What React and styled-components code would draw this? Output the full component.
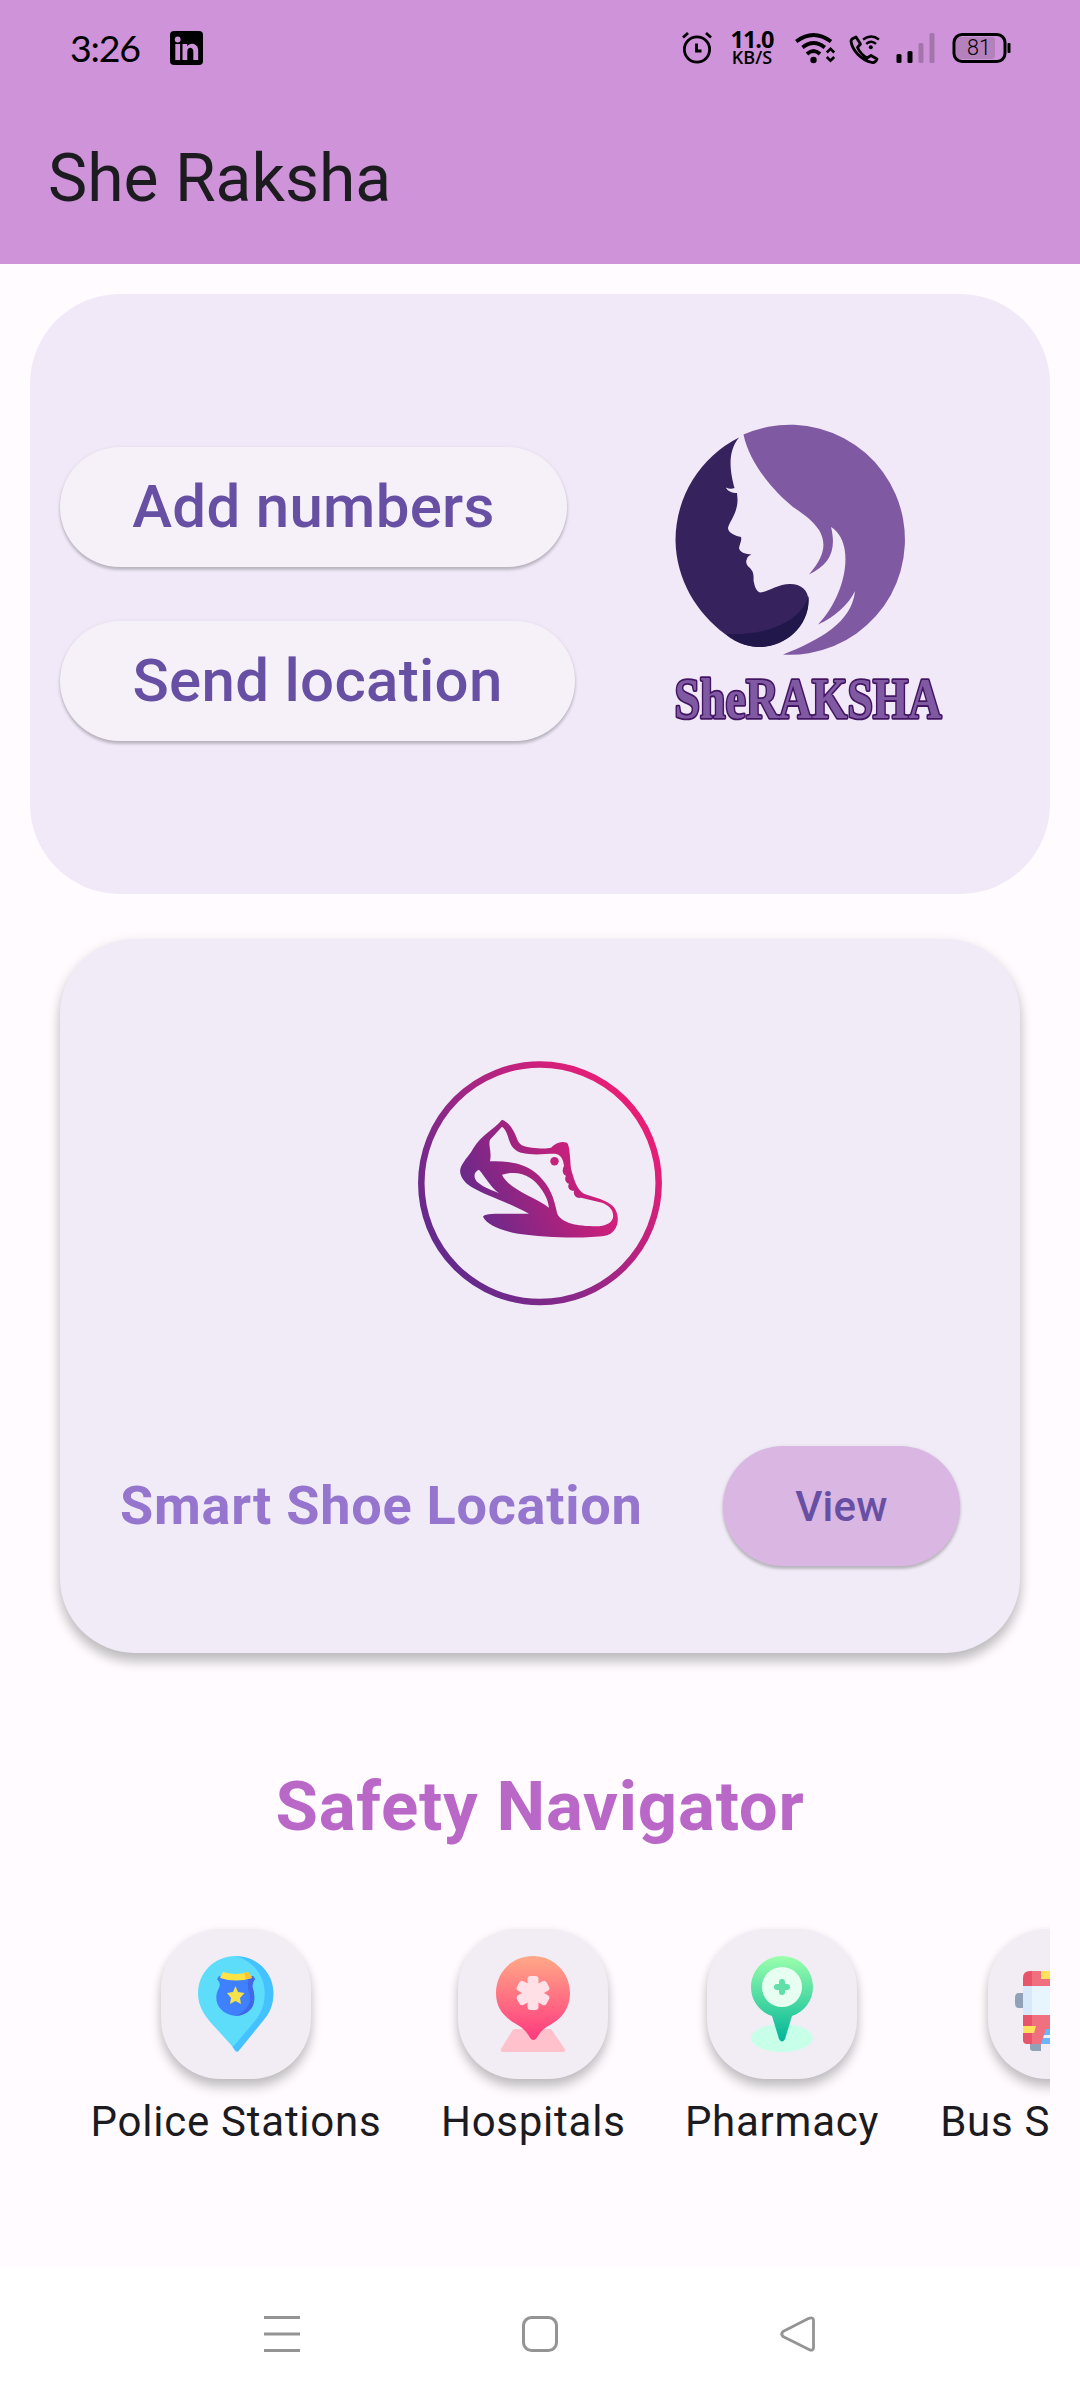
import React from "react";
import styled, { createGlobalStyle } from "styled-components";

const Global = createGlobalStyle`
  * { box-sizing: border-box; }
  body { margin: 0; background: #fffbff; font-family: Roboto, "Noto Sans", sans-serif; }
  svg { display: block; flex: none; overflow: visible; }
`;

const Screen = styled.div`
  width: 1080px; height: 2400px; display: flex; flex-direction: column;
  background: #fffbff; overflow: hidden; color: #1c1b1f;
`;
const Top = styled.header`
  height: 264px; background: #ce93d8; display: flex; flex-direction: column;
`;
const StatusBar = styled.div`
  height: 96px; padding: 0 66px 0 70px; display: flex; align-items: center; justify-content: space-between; color: #000;
`;
const StatusGroup = styled.div`display: flex; align-items: center;`;
const Clock = styled.span`
  font: 400 37.5px/48px Lato, sans-serif; letter-spacing: -1.2px; width: 100px; white-space: nowrap;
`;
const Speed = styled.div`
  width: 44px; margin: 0 21px 0 18px; display: flex; flex-direction: column; align-items: center;
  white-space: nowrap; font-family: "Open Sans", sans-serif; font-weight: 600;
`;
const Rate = styled.span`font-size: 23.5px; line-height: 18px; letter-spacing: -1px; font-weight: 700;`;
const Unit = styled.span`font-size: 18px; line-height: 19px;`;
const Title = styled.h1`
  margin: 0; padding: 43px 0 0 48px; font-size: 66px; line-height: 80px; font-weight: 400;
`;
const Content = styled.main`
  flex: 1; padding-top: 30px; display: flex; flex-direction: column;
`;
const Hero = styled.section`
  height: 600px; margin: 0 30px; padding-left: 30px; border-radius: 90px; background: #f1e9f8;
  display: flex; align-items: center; justify-content: space-between;
`;
const Actions = styled.div`display: flex; flex-direction: column; align-items: flex-start; gap: 54px;`;
const Pill = styled.button`
  height: 120px; width: ${p => p.$w}px; padding: 0 0 ${p => (p.$accent ? 0 : 2)}px; border: 0; border-radius: 60px;
  background: ${p => (p.$accent ? "#dab6e3" : "#f6f1f9")};
  color: #6750a4; font-family: inherit; font-weight: 500; font-size: ${p => (p.$accent ? 42 : 60)}px;
  letter-spacing: 0.3px; white-space: nowrap;
  box-shadow: 0 3px 3px rgba(0,0,0,.18), 0 1px 4px rgba(0,0,0,.1);
`;
const Brand = styled.div`width: 270px; height: 300px; margin: 0 105px 48px 0;`;
const ShoeCard = styled.section`
  height: 714px; margin: 45px 60px 0; border-radius: 75px; background: #f0ebf6;
  display: flex; flex-direction: column; align-items: center;
  box-shadow: 0 9px 12px rgba(0,0,0,.2), 0 3px 14px rgba(0,0,0,.1);
`;
const ShoeArt = styled.div`height: 507px; padding-top: 122px;`;
const ShoeRow = styled.div`
  align-self: stretch; padding: 0 60px; display: flex; align-items: center; justify-content: space-between;
`;
const ShoeLabel = styled.span`
  padding-bottom: 2px; font-size: 54px; font-weight: 700; color: #9575cd; letter-spacing: 0.75px; white-space: nowrap;
`;
const Heading = styled.h2`
  margin: 109px 0 0; font-size: 69px; line-height: 90px; font-weight: 700; color: #ba68c8; text-align: center; letter-spacing: 0.75px;
`;
const Places = styled.div`
  margin: 49px 30px 0 0; padding: 28px 0 0 90px; height: 300px; overflow: hidden; display: flex; gap: 60px;
`;
const Place = styled.div`flex: none; width: ${p => p.$w}px; display: flex; flex-direction: column; align-items: center;`;
const Tile = styled.div`
  width: 150px; height: 150px; border-radius: 60px; background: #f2edf5; display: grid; place-items: center;
  box-shadow: 0 9px 12px rgba(0,0,0,.2), 0 2px 10px rgba(0,0,0,.09);
`;
const PlaceName = styled.span`margin-top: 13px; font-size: 42px; line-height: 60px; letter-spacing: 0.75px; white-space: nowrap;`;
const NavBar = styled.nav`
  height: 133px; background: #fff; display: flex; justify-content: space-between; align-items: center; padding: 0 264px; 
`;

const LinkedIn = () => (
  <svg width="33" height="34" viewBox="0 0 33 34">
    <rect width="33" height="34" rx="4" fill="#000" />
    <g fill="#ce93d8"><circle cx="7.7" cy="8.5" r="2.9" /><rect x="5.3" y="13" width="4.8" height="16" />
      <path d="M12.5 13h4.7v2.2c2.6-4.1 11-3.500 11 4.300V29h-4.900v-8.500c0-5-6-5-6 0V29h-4.800z" /></g>
  </svg>
);

const StatusIcons = () => (
  <svg width="219" height="40" viewBox="0 0 219 40" fill="none" stroke="#000">
    <path strokeWidth="3.800" d="M1.200 13.500Q18.500 .5 36 13.500M7.500 19.500Q18.500 10.500 29.800 19.500M12 26Q18.500 20 25 26" />
    <path d="M31.800 24.500l3.700-3.700 3.700 3.700M31.800 29l3.700 3.700 3.700-3.700" strokeWidth="2.600" />
    <path d="M68 11.500Q76.300 5.500 84 11.500M71.200 15.800Q76.300 11.500 81 15.800" strokeWidth="2.400" />
    <path d="M57 11L61 9 65.500 16 62.500 19.500Q65.500 26 72 30L76 27.500 82 31Q80.500 35 77 34.500C66 32 57 22 56 13Z" strokeWidth="2.800" strokeLinejoin="round" />
    <g fill="#000" stroke="none"><circle cx="18.500" cy="32" r="3.200" /><circle cx="75.800" cy="19.300" r="2" />
      <rect x="101.500" y="26" width="5" height="9" rx="1.500" /><rect x="112.500" y="23" width="5" height="12" rx="1.500" />
      <rect x="123.500" y="15" width="5" height="20" rx="1.500" opacity=".2" /><rect x="134.500" y="5" width="5" height="30" rx="1.500" opacity=".2" />
      <rect x="161" y="9" width="39" height="22" rx="3" opacity=".12" /><rect x="212.500" y="15" width="3" height="10" rx="1" /></g>
    <rect x="159" y="6.500" width="51" height="27" rx="8" strokeWidth="3" />
    <text x="184" y="27.300" textAnchor="middle" fontFamily="Roboto, sans-serif" fontWeight="300" fontSize="21.500" fill="#000" stroke="none">81</text>
  </svg>
);

const Alarm = () => (
  <svg width="30" height="34" viewBox="0 0 30 34" fill="none" stroke="#000" strokeWidth="2.800">
    <circle cx="15" cy="18.500" r="12.600" /><path d="M14.500 12.500V20H19.500M1 6.500L6 2M29 6.500L24 2" />
  </svg>
);

const Logo = () => (
  <svg width="270" height="300" viewBox="35 20 270 300">
    <path fill="#36225c" d="M99 37.500A115 115 0 0 0 35.500 140C36 180 57 213 85 234C98 245 112 247 120 247C147 246 168 225 168.500 200C168 190 161 184 150 184C138 184 128 192 120 192.500C116 191 114.500 186 113.500 180C114 173 112.500 171 110 168C107 166 105 162 107 159C107 157 110 155 111.500 154.500C106 154 100 153 99 148C100 143 102 140 101 137C96 136 88 133 88 128C89 122 98 113 97.500 99L97 93C92 93 87 91 86 87.500C89 89 92 89 94.500 88C91 75 86 53 99 37.500Z" />
    <path fill="#21174a" d="M86 234C131 236 162 219 168.500 196C171 226 145 247 120 247C106 247 95 241 86 234Z" />
    <path fill="#8059a3" d="M103.500 34.500A115 115 0 1 1 143 254.500C180 240 212 222 215 191C209 204 195 217 178 224.500C202 199 210 163 203 143C201 136 196 130 191 127C197 151 189 165 169 174.500C186 155 186 142 179 130C173 121 165 115 153 107C137 94 110 66 103.500 34.500Z" />
    <text x="34.500" y="318" fontFamily="Liberation Serif, serif" fontWeight="700" fontSize="58" textLength="267" lengthAdjust="spacingAndGlyphs" fill="#8059a3" stroke="#431563" strokeWidth="3.600" strokeLinejoin="round" paintOrder="stroke">SheRAKSHA</text>
  </svg>
);

const Shoe = () => (
  <svg width="244" height="244" viewBox="18 21.200 244 244">
    <defs><linearGradient id="shoe" gradientUnits="userSpaceOnUse" x1="55" y1="225" x2="240" y2="85">
      <stop offset="0" stopColor="#652a8c" /><stop offset=".35" stopColor="#8d2888" /><stop offset="1" stopColor="#e81e76" /></linearGradient>
      <linearGradient id="sole" gradientUnits="userSpaceOnUse" x1="70" y1="170" x2="200" y2="110">
      <stop offset="0" stopColor="#652a8c" /><stop offset=".5" stopColor="#a4237f" /><stop offset="1" stopColor="#e01f78" /></linearGradient></defs>
    <circle cx="140" cy="143.500" r="118.700" fill="none" stroke="url(#shoe)" strokeWidth="6.500" />
    <path fill="url(#sole)" fillRule="evenodd" d="M102 80C110 83 114 91 117 99C119 105 123 107 132 108C140 109 147 109 151 108C156 103 161 101 167 103C170 106 170 120 171 129C174 140 177 150 184 154C195 158 212 161 216 171C221 183 215 194 205 196C185 199 145 198 118 194C99 190 87 185 83 177C84 173 99 174 129 174C105 161 86 156 71 147C63 142 58 134 61 127C65 119 70 115 73 109C82 94 93 91 102 80ZM102 87L90 100C88 105 92 112 90 121.500C109 121 126 123 139 136C150 147 154 158 157 173C160 182 173 186 193 186.500C205 187 211 184 213 178C214 170 209 166 202 163L181 158C176 159 173 155 174 151C169 151 167 147 169 144C166 143 164 140 166 136C162 134 162 130 164 126C163 119 161 115 155 114C144 114 134 116 121 113C106 108 111 94 102 87ZM79 130C86 138 90 147 99 153.500C92 150 85 149 77 142C73 137 74 132 79 130ZM102 135C120 129 134 138 141 149C146 156 148 161 149 168C135 157 109 150 102 135Z" />
    <circle cx="154.500" cy="121.500" r="4.200" fill="#c5227c" />
  </svg>
);

const Police = () => (
  <svg width="96" height="96" viewBox="0 0 96 96">
    <path fill="#43c2ff" d="M48 0C69 0 85.500 17 85.500 37C85.500 50 81 58 75 65L51 94.500Q49 97 47 94.500L44.500 91Z" />
    <path fill="#5dddf9" d="M48 0C26 0 10 17 10 37C10 51 17 60 24 68L45 91L67 65C83 45 81 11 48 0Z" />
    <path fill="#3f80ff" d="M31 20Q48 26 65 20L67 23Q63 28 65 33C69 48 64 58 48 60C31 58 25 45 30 34Q34 28 29 23Z" />
    <path fill="#4068e8" d="M60 23L65 20 67 23Q63 28 65 33C69 48 64 58 48 60C64 51 64 43 60 33Z" />
    <path fill="#fee345" d="M35 16Q48 20 60 16L64 22Q48 27 32 22Z" /><path fill="#ffc52e" d="M56 17L60 16 64 22 58 23Z" />
    <path fill="#f5e14a" d="M47.500 30L50 36 56.500 37 52 42 53 48 47.500 45 42 48 43 42 39 37 45 36Z" />
  </svg>
);
const Hospital = () => (
  <svg width="96" height="96" viewBox="0 0 96 96">
    <defs><linearGradient id="hospital" x2="0" y2="1"><stop stopColor="#ffa987" /><stop offset="1" stopColor="#ff397e" /></linearGradient></defs>
    <path fill="#ffc1cc" d="M31 73h35L80 93Q81 96 78 96H18Q15 96 16 93L27 75Q28 73 31 73Z" />
    <path fill="url(#hospital)" d="M48 0C68 0 85 16 85 37C85 53 76 63 65 69Q57 73 53 80 48 88 44 80 39 72 31 68C19 61 11 52 11 37C11 16 27 0 48 0Z" />
    <g fill="#ffe0e6"><rect x="42.500" y="20" width="11" height="34" rx="3" /><rect x="42.500" y="20" width="11" height="34" rx="3" transform="rotate(60 48 37)" /><rect x="42.500" y="20" width="11" height="34" rx="3" transform="rotate(120 48 37)" /></g>
  </svg>
);
const Pharmacy = () => (
  <svg width="96" height="96" viewBox="0 0 96 96">
    <defs><linearGradient id="pharmacy" x2="0" y2="1"><stop stopColor="#9bffac" /><stop offset="1" stopColor="#00b599" /></linearGradient></defs>
    <ellipse cx="48" cy="82" rx="31" ry="14" fill="#c8ffe8" />
    <path fill="url(#pharmacy)" d="M48 0C66 0 79 14 79 31C79 45 70 56 58 60L51 83Q48 88 45 83L38 60C26 56 17 45 17 31C17 14 31 0 48 0Z" />
    <circle cx="48" cy="31" r="20" fill="#e6fff0" />
    <path d="M48 26V36M43 31H53" stroke="#60dfa8" strokeWidth="6" strokeLinecap="round" />
  </svg>
);
const Bus = () => (
  <svg width="96" height="96" viewBox="0 0 96 96">
    <path fill="#91a2b7" d="M8 37H4Q0 37 0 42V47Q0 52 4 52H8ZM88 37h4q4 0 4 5v5q0 5-4 5h-4zM15 87h11v8h-8q-3 0-3-3zM70 87h11v8h-11z" />
    <path fill="#e8556a" d="M8 22Q8 15 15 15H80Q88 15 88 22V84Q88 88 84 88H12Q8 88 8 84Z" /><path fill="#f07080" d="M17 15H80V88H17Z" />
    <path fill="#d8e9fc" d="M8 30H88V59H8Z" /><path fill="#e8f5ff" d="M17 30H80V59H17Z" />
    <path fill="#ffe15b" d="M26 15H70V23H26ZM8 70H21L19 77H8ZM75 70H88V77H77Z" />
    <path fill="#69b5ff" d="M31 73H65L70 88H26Z" /><path fill="#e5f5ff" d="M29 79H67L68 82H28Z" />
  </svg>
);

const places = [
  ["Police Stations", 292, Police],
  ["Hospitals", 182.5, Hospital],
  ["Pharmacy", 195, Pharmacy],
  ["Bus Stations", 246, Bus],
];

export default function App() {
  return (
    <Screen>
      <Global />
      <Top>
        <StatusBar>
          <StatusGroup><Clock>3:26</Clock><LinkedIn /></StatusGroup>
          <StatusGroup><Alarm /><Speed><Rate>11.0</Rate><Unit>KB/S</Unit></Speed><StatusIcons /></StatusGroup>
        </StatusBar>
        <Title>She Raksha</Title>
      </Top>
      <Content>
        <Hero>
          <Actions><Pill $w={507}>Add numbers</Pill><Pill $w={515}>Send location</Pill></Actions>
          <Brand><Logo /></Brand>
        </Hero>
        <ShoeCard>
          <ShoeArt><Shoe /></ShoeArt>
          <ShoeRow><ShoeLabel>Smart Shoe Location</ShoeLabel><Pill $w={237} $accent>View</Pill></ShoeRow>
        </ShoeCard>
        <Heading>Safety Navigator</Heading>
        <Places>
          {places.map(([name, w, Icon]) => (
            <Place key={name} $w={w}><Tile><Icon /></Tile><PlaceName>{name}</PlaceName></Place>
          ))}
        </Places>
      </Content>
      <NavBar>
        <svg width="36" height="36" viewBox="0 0 36 36" fill="none" stroke="#949494" strokeWidth="3"><path d="M0 1.500H36M0 18H36M0 34.500H36" /></svg>
        <svg width="36" height="36" viewBox="0 0 36 36" fill="none" stroke="#949494" strokeWidth="3"><rect x="1.500" y="1.500" width="33" height="33" rx="8" /></svg>
        <svg width="36" height="36" viewBox="0 0 36 36" fill="none" stroke="#949494" strokeWidth="2.800" strokeLinejoin="round"><path d="M3 15.500L28.500 2.500Q33 .8 33.500 4V32Q33 35.500 29 33.500L3 20.500Q.5 18 3 15.500Z" /></svg>
      </NavBar>
    </Screen>
  );
}
